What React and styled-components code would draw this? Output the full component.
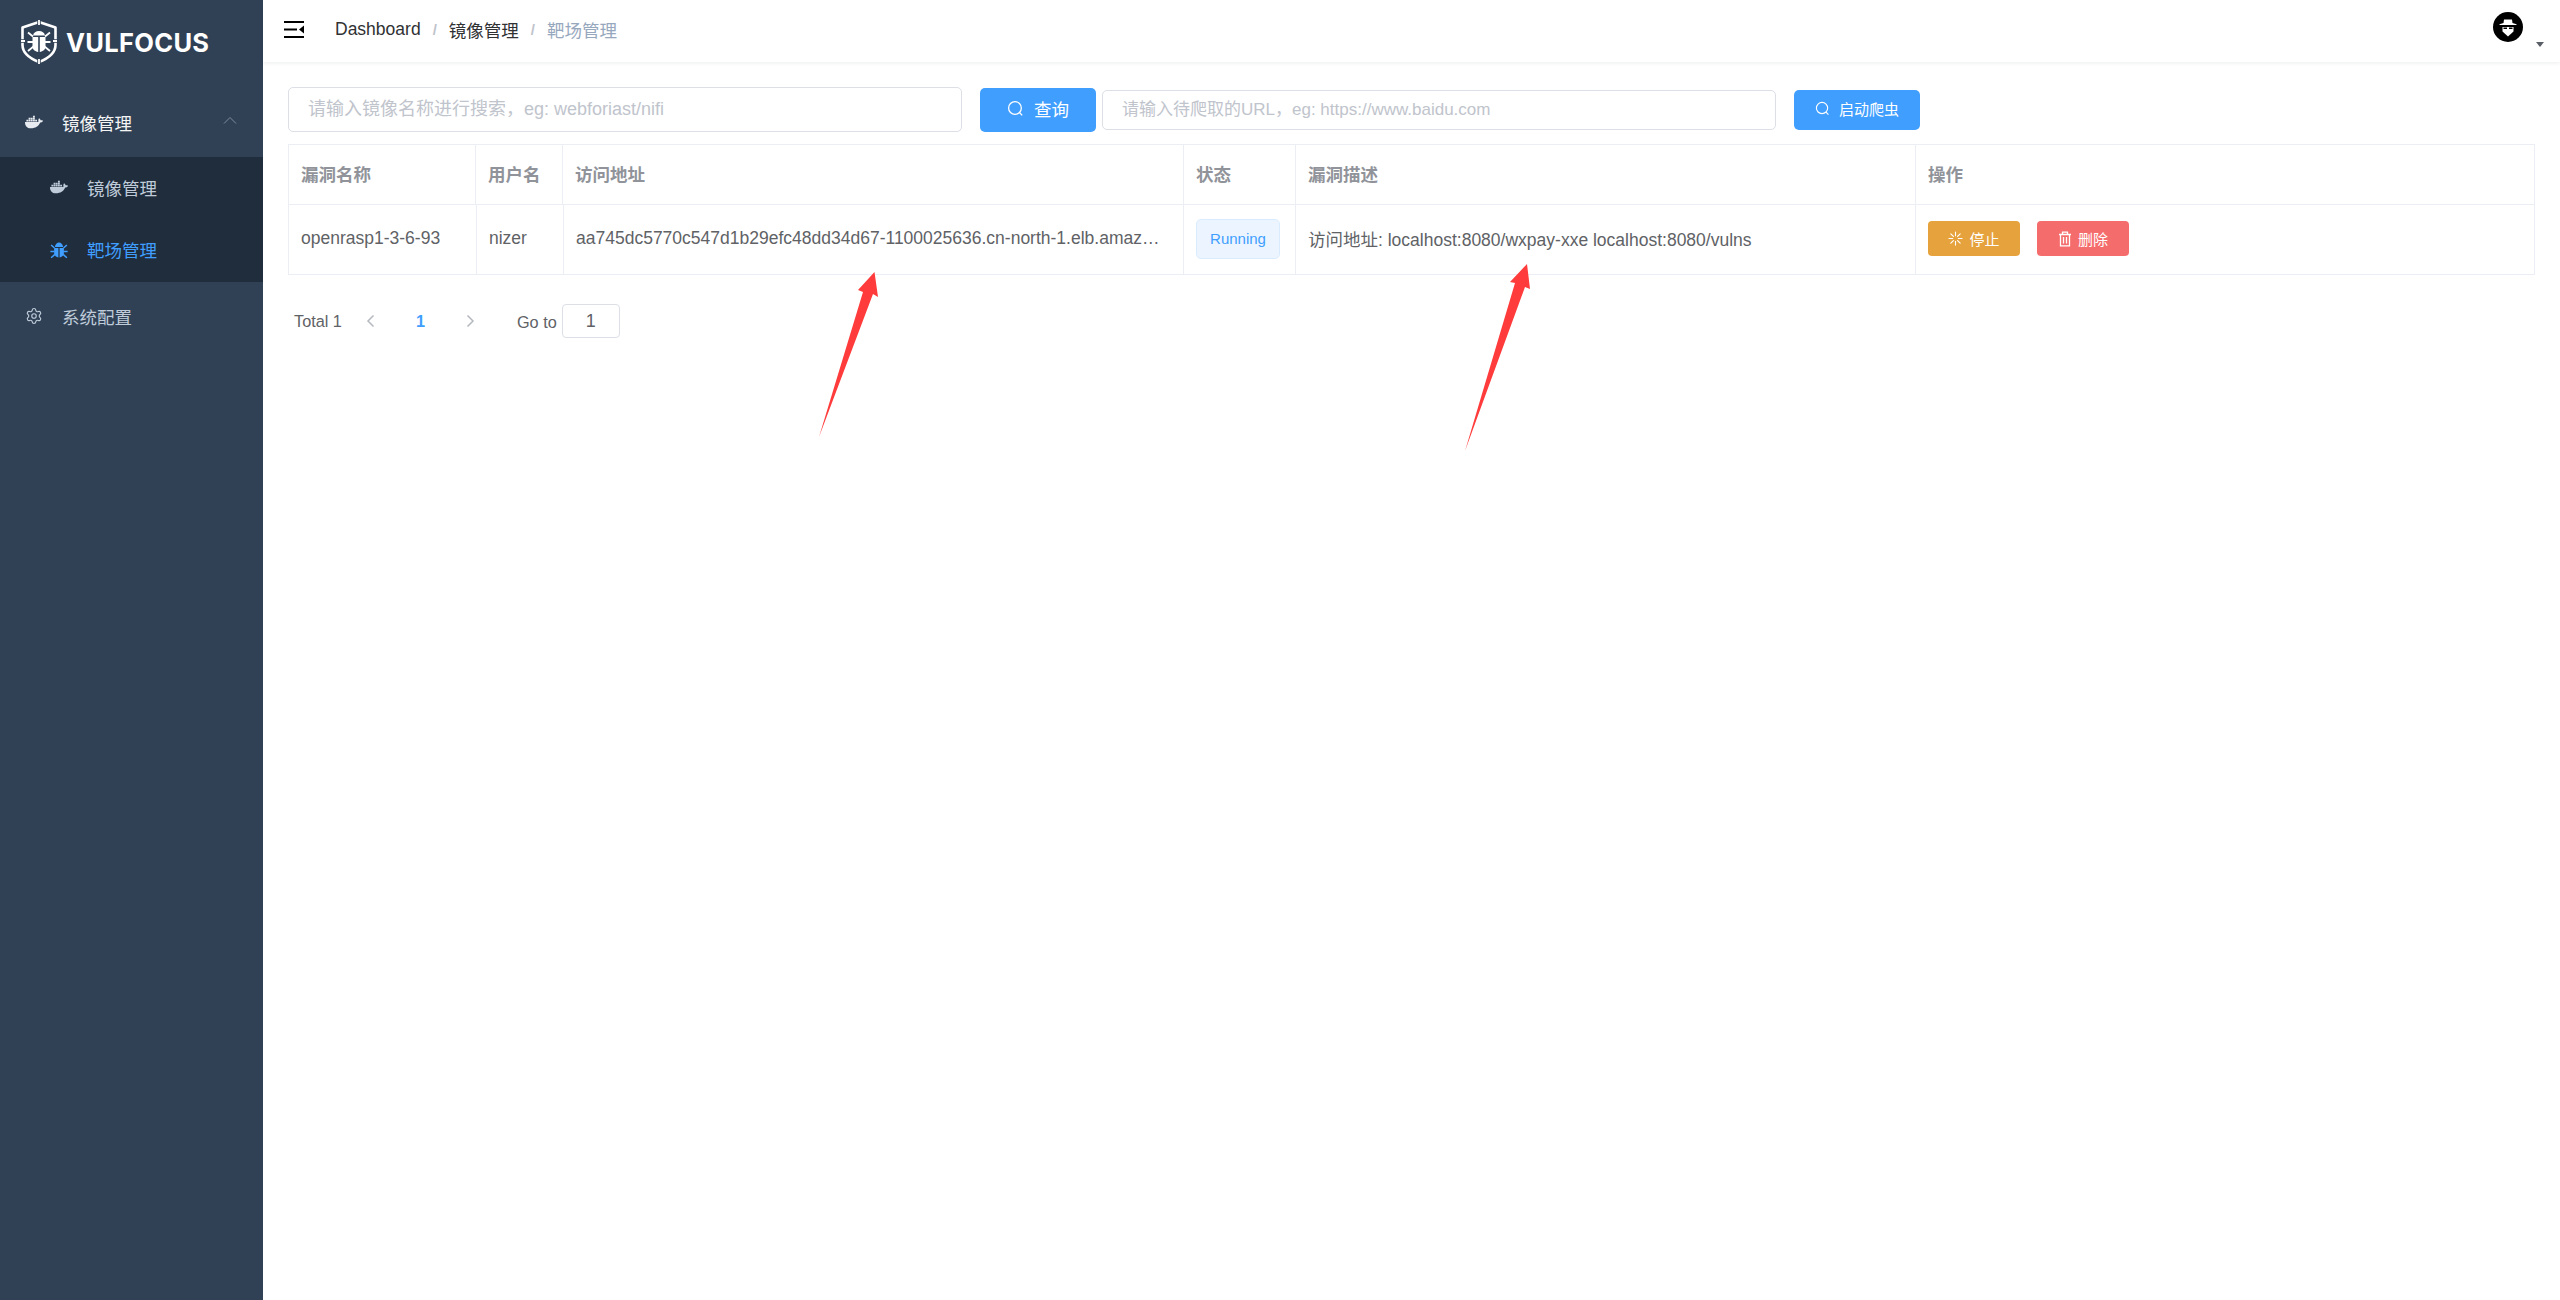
import React from 'react'
import styled, { createGlobalStyle } from 'styled-components'
import { FaDocker } from 'react-icons/fa'
import { Settings } from 'lucide-react'

const GlobalStyle = createGlobalStyle`
  html, body { margin: 0; padding: 0; background: #fff; }
  body { font-family: "Liberation Sans", "Noto Sans CJK SC", sans-serif; }
  * { box-sizing: border-box; }
`

const BugIcon = ({ size = 19, color = 'currentColor' }) => (
  <svg width={size} height={size} viewBox="0 0 24 24" fill={color}>
    <path d="M6.500 8.500C7 4.500 9.500 2.500 12 2.500s5 2 5.500 6z" />
    <path d="M5.500 10h5.700v12.500C7.800 22 5.500 19.500 5.500 16.500zM12.800 10h5.700v6.500c0 3-2.300 5.500-5.700 6z" />
    <path d="M1.500 6 6 10M22.500 6 18 10M0.500 14.500H6M23.500 14.500H18M1.500 23 6.500 18.500M22.500 23 17.500 18.500" stroke={color} strokeWidth="2" fill="none" />
  </svg>
)

const SearchIcon = ({ size = 16 }) => (
  <svg width={size} height={size} viewBox="0 0 16 16" fill="none" stroke="currentColor" strokeWidth="1.200">
    <circle cx="7.500" cy="7.500" r="6" />
    <path d="M11.800 11.800 14.300 14.500" />
  </svg>
)

const SpinnerIcon = () => (
  <svg width="15" height="15" viewBox="0 0 16 16" fill="none" stroke="currentColor" strokeWidth="1.200" strokeLinecap="round">
    <path d="M8 1v4M8 11v4M1 8h4M11 8h4M3 3l2.800 2.800M10.200 10.200 13 13M13 3l-2.800 2.800M5.800 10.200 3 13" />
  </svg>
)

const TrashIcon = () => (
  <svg width="14" height="16" viewBox="0 0 14 16" fill="none" stroke="currentColor" strokeWidth="1.300">
    <path d="M1 3.500h12M4.500 3.500V1.200h5v2.300M2.500 3.500v11.300h9V3.500M5.500 6v6.500M8.500 6v6.500" />
  </svg>
)

const HamburgerIcon = () => (
  <svg width="20" height="17" viewBox="0 0 20 17" fill="#000">
    <rect x="0" y="0" width="20" height="2" />
    <rect x="0" y="7.500" width="13" height="2" />
    <rect x="0" y="15" width="20" height="2" />
    <path d="M20 4.500v8l-5-4z" />
  </svg>
)

const LogoIcon = () => (
  <svg width="38" height="44" viewBox="0 0 38 44">
    <path d="M19 2 35.500 7.500V25C35.500 33 28 38.500 19 42 10 38.500 2.500 33 2.500 25V7.500z" fill="none" stroke="#fff" strokeWidth="2.600" strokeLinejoin="round" />
    <path d="M19 0v6M19 38v6M0 21h5M33 21h5" stroke="#304156" strokeWidth="3.500" />
    <path d="M19 0v5M19 39v5M1 21h4M33 21h4" stroke="#fff" strokeWidth="1.800" />
    <path d="M13 15.500C13.500 12.500 16 11 19 11s5.500 1.500 6 4.500z" fill="#fff" />
    <path d="M12.500 17h5.700v15C15 31.500 12.500 29.500 12.500 26.500zM19.800 17h5.700v9.500c0 3-2.500 5-5.700 5.500z" fill="#fff" />
    <path d="M8 12.500 13 16.500M30 12.500 25 16.500M7.500 22H13M30.500 22H25M8 31 13.500 26.500M30 31 24.500 26.500" stroke="#fff" strokeWidth="1.800" fill="none" />
  </svg>
)

const AvatarIcon = () => (
  <svg width="30" height="30" viewBox="0 0 30 30">
    <circle cx="15" cy="15" r="15" fill="#000" />
    <path d="M10.500 11 11 7.500h8l.500 3.500 4 1.200v.8H6.500v-.8z" fill="#fff" />
    <path d="M9.500 15h11v4.500L15 24.500 9.500 19.500z" fill="#fff" />
    <path d="M10.500 15.500h3.500v1.500h-3.500zM16 15.500h3.500v1.500H16z" fill="#000" />
  </svg>
)

const Page = styled.div`
  display: flex;
  min-height: 100vh;
  position: relative;
`

const Sidebar = styled.aside`
  width: 263px;
  flex: none;
  background: #304156;
`

const Logo = styled.div`
  height: 92px;
  padding: 0 0 8px 20px;
  display: flex;
  align-items: center;
  gap: 8px;
  color: #fff;
  font-size: 25.500px;
  font-weight: 700;
  letter-spacing: 0.3px;
  font-family: "Inter", "Liberation Sans", sans-serif;
`

const MenuItem = styled.div`
  height: ${p => p.$height || 65}px;
  display: flex;
  align-items: center;
  padding-left: ${p => (p.$sub ? 50 : 25)}px;
  padding-bottom: ${p => p.$lift || 2}px;
  font-size: 17.500px;
  color: ${p => p.$color || '#bfcbd9'};
  position: relative;
`

const MenuIcon = styled.span`
  width: 18px;
  margin-right: 19px;
  display: flex;
  justify-content: center;
`

const Chevron = styled.svg`
  position: absolute;
  right: 26px;
  top: 24px;
`

const SubMenu = styled.div`
  background: #1f2d3d;
`

const Content = styled.div`
  flex: 1;
  min-width: 0;
`

const Navbar = styled.header`
  height: 62px;
  display: flex;
  align-items: center;
  padding: 0 16px 4px 21px;
  box-shadow: 0 1px 4px rgba(0, 21, 41, 0.08);
  font-size: 17.500px;
`

const Crumbs = styled.nav`
  margin-left: 31px;
  display: flex;
  align-items: center;
  color: #303133;
`

const Crumb = styled.span`
  color: ${p => (p.$last ? '#97a8be' : '#303133')};
`

const Slash = styled.span`
  color: #c0c4cc;
  margin: 0 12px;
  font-weight: 700;
  font-size: 15px;
`

const UserBox = styled.div`
  margin-left: auto;
  position: relative;
  padding: 0 21px 0 0;
  height: 30px;
  display: flex;
  align-self: flex-start;
  margin-top: 12px;
`

const Caret = styled.i`
  position: absolute;
  right: 0;
  bottom: -5px;
  width: 0;
  height: 0;
  border-left: 4.500px solid transparent;
  border-right: 4.500px solid transparent;
  border-top: 5px solid #5a5e66;
`

const Main = styled.main`
  padding: 25px 25px 0;
`

const Toolbar = styled.div`
  display: flex;
  align-items: center;
  height: 45px;
  margin-bottom: 12px;
`

const SearchInput = styled.input`
  width: 674px;
  height: ${p => p.$height}px;
  flex: none;
  padding: 0 19px;
  border: 1px solid #dcdfe6;
  border-radius: 5px;
  outline: none;
  font-family: inherit;
  font-size: ${p => p.$font}px;
  color: #606266;
  margin-left: ${p => p.$left || 0}px;
  &::placeholder { color: #c0c4cc; opacity: 1; }
`

const QueryButton = styled.button`
  flex: none;
  width: ${p => p.$width}px;
  height: ${p => p.$height}px;
  margin-left: 18px;
  padding: 0 0 2px;
  border: none;
  border-radius: 5px;
  background: #409eff;
  color: #fff;
  font-family: inherit;
  font-size: ${p => p.$font}px;
  display: flex;
  align-items: center;
  justify-content: center;
  gap: ${p => p.$gap}px;
`

const Table = styled.div`
  border: 1px solid #ebeef5;
  font-size: 17.500px;
  color: #606266;
`

const Row = styled.div`
  display: grid;
  grid-template-columns: ${p => p.$cols};
  height: ${p => p.$height}px;
  border-bottom: ${p => (p.$head ? '1px solid #ebeef5' : 'none')};
`

const Cell = styled.div`
  display: flex;
  align-items: center;
  gap: ${p => p.$gap || 0}px;
  padding: 0 12px 2px;
  min-width: 0;
  border-right: 1px solid #ebeef5;
  font-weight: ${p => (p.$head ? 700 : 400)};
  color: ${p => (p.$head ? '#909399' : '#606266')};
  &:last-child { border-right: none; }
`

const Clipped = styled.span`
  display: block;
  padding-right: 8px;
  white-space: nowrap;
  overflow: hidden;
  text-overflow: ellipsis;
`

const Tag = styled.span`
  width: 84px;
  height: 40px;
  display: flex;
  align-items: center;
  justify-content: center;
  background: #ecf5ff;
  border: 1px solid #d9ecff;
  border-radius: 5px;
  color: #409eff;
  font-size: 15px;
`

const ActionButton = styled.button`
  width: 92px;
  height: 35px;
  border: none;
  border-radius: 4px;
  background: ${p => p.$bg};
  color: #fff;
  font-family: inherit;
  font-size: 15px;
  display: flex;
  align-items: center;
  justify-content: center;
  gap: 6px;
  padding: 0;
`

const Pagination = styled.div`
  display: flex;
  align-items: center;
  height: 34px;
  margin-top: 29px;
  padding-left: 6px;
  font-size: 16.250px;
  color: #606266;
`

const PageArrow = styled.svg`
  margin-left: ${p => p.$left}px;
`

const PageNum = styled.span`
  margin-left: 41px;
  color: #409eff;
  font-weight: 700;
  font-size: 16.250px;
`

const GoTo = styled.span`
  margin: 3px 5px 0 42px;
`

const GoInput = styled.div`
  width: 58px;
  height: 34px;
  border: 1px solid #dcdfe6;
  border-radius: 4px;
  display: flex;
  align-items: center;
  justify-content: center;
  font-size: 18px;
`

const ArrowLayer = styled.svg`
  position: absolute;
  left: 0;
  top: 0;
  pointer-events: none;
`

const headCols = '187px 87px 621px 112px 620px 1fr'
const bodyCols = '188px 87px 620px 112px 620px 1fr'

export default function App() {
  return (
    <Page>
      <GlobalStyle />
      <Sidebar>
        <Logo>
          <LogoIcon />
          VULFOCUS
        </Logo>
        <MenuItem $color="#f4f4f5" $lift={5}>
          <MenuIcon><FaDocker size={18} color="#e8ecf1" /></MenuIcon>
          镜像管理
          <Chevron width="14" height="8" viewBox="0 0 14 8" fill="none" stroke="#7f8b9a" strokeWidth="1">
            <path d="M1 7.500 7 1.500 13 7.500" />
          </Chevron>
        </MenuItem>
        <SubMenu>
          <MenuItem $sub $height={62.5}>
            <MenuIcon><FaDocker size={18} color="#bfcbd9" /></MenuIcon>
            镜像管理
          </MenuItem>
          <MenuItem $sub $height={62.5} $color="#409eff">
            <MenuIcon><BugIcon color="#409eff" /></MenuIcon>
            靶场管理
          </MenuItem>
        </SubMenu>
        <MenuItem $height={70}>
          <MenuIcon><Settings size={18} strokeWidth={1.500} /></MenuIcon>
          系统配置
        </MenuItem>
      </Sidebar>

      <Content>
        <Navbar>
          <HamburgerIcon />
          <Crumbs>
            <Crumb>Dashboard</Crumb>
            <Slash>/</Slash>
            <Crumb>镜像管理</Crumb>
            <Slash>/</Slash>
            <Crumb $last>靶场管理</Crumb>
          </Crumbs>
          <UserBox>
            <AvatarIcon />
            <Caret />
          </UserBox>
        </Navbar>

        <Main>
          <Toolbar>
            <SearchInput $height={45} $font={18} placeholder="请输入镜像名称进行搜索，eg: webforiast/nifi" />
            <QueryButton $width={116} $height={44} $font={17.5} $gap={10}>
              <SearchIcon size={17} />
              查询
            </QueryButton>
            <SearchInput $height={40} $font={17} $left={6} placeholder="请输入待爬取的URL，eg: https://www.baidu.com" />
            <QueryButton $width={126} $height={40} $font={15} $gap={9}>
              <SearchIcon size={15} />
              启动爬虫
            </QueryButton>
          </Toolbar>

          <Table>
            <Row $head $cols={headCols} $height={60}>
              <Cell $head>漏洞名称</Cell>
              <Cell $head>用户名</Cell>
              <Cell $head>访问地址</Cell>
              <Cell $head>状态</Cell>
              <Cell $head>漏洞描述</Cell>
              <Cell $head>操作</Cell>
            </Row>
            <Row $cols={bodyCols} $height={69}>
              <Cell>openrasp1-3-6-93</Cell>
              <Cell>nizer</Cell>
              <Cell>
                <Clipped>aa745dc5770c547d1b29efc48dd34d67-1100025636.cn-north-1.elb.amazonaws.com.cn:8080</Clipped>
              </Cell>
              <Cell><Tag>Running</Tag></Cell>
              <Cell>访问地址: localhost:8080/wxpay-xxe localhost:8080/vulns</Cell>
              <Cell $gap={17}>
                <ActionButton $bg="#e6a23c"><SpinnerIcon />停止</ActionButton>
                <ActionButton $bg="#f56c6c"><TrashIcon />删除</ActionButton>
              </Cell>
            </Row>
          </Table>

          <Pagination>
            Total 1
            <PageArrow $left={24} width="9" height="14" viewBox="0 0 9 14" fill="none" stroke="#b4b8bf" strokeWidth="1.500">
              <path d="M7.500 1.500 2 7l5.500 5.500" />
            </PageArrow>
            <PageNum>1</PageNum>
            <PageArrow $left={41} width="9" height="14" viewBox="0 0 9 14" fill="none" stroke="#b4b8bf" strokeWidth="1.500">
              <path d="M1.500 1.500 7 7l-5.500 5.500" />
            </PageArrow>
            <GoTo>Go to</GoTo>
            <GoInput>1</GoInput>
          </Pagination>
        </Main>
      </Content>

      <ArrowLayer width="2560" height="500" viewBox="0 0 2560 500" fill="#ff3b3b">
        <polygon points="874.500,272 858,290 863,292 819,437 873,294 878,297" />
        <polygon points="1527,264 1510,282 1515,283 1465,451 1525,287 1530,289" />
      </ArrowLayer>
    </Page>
  )
}
